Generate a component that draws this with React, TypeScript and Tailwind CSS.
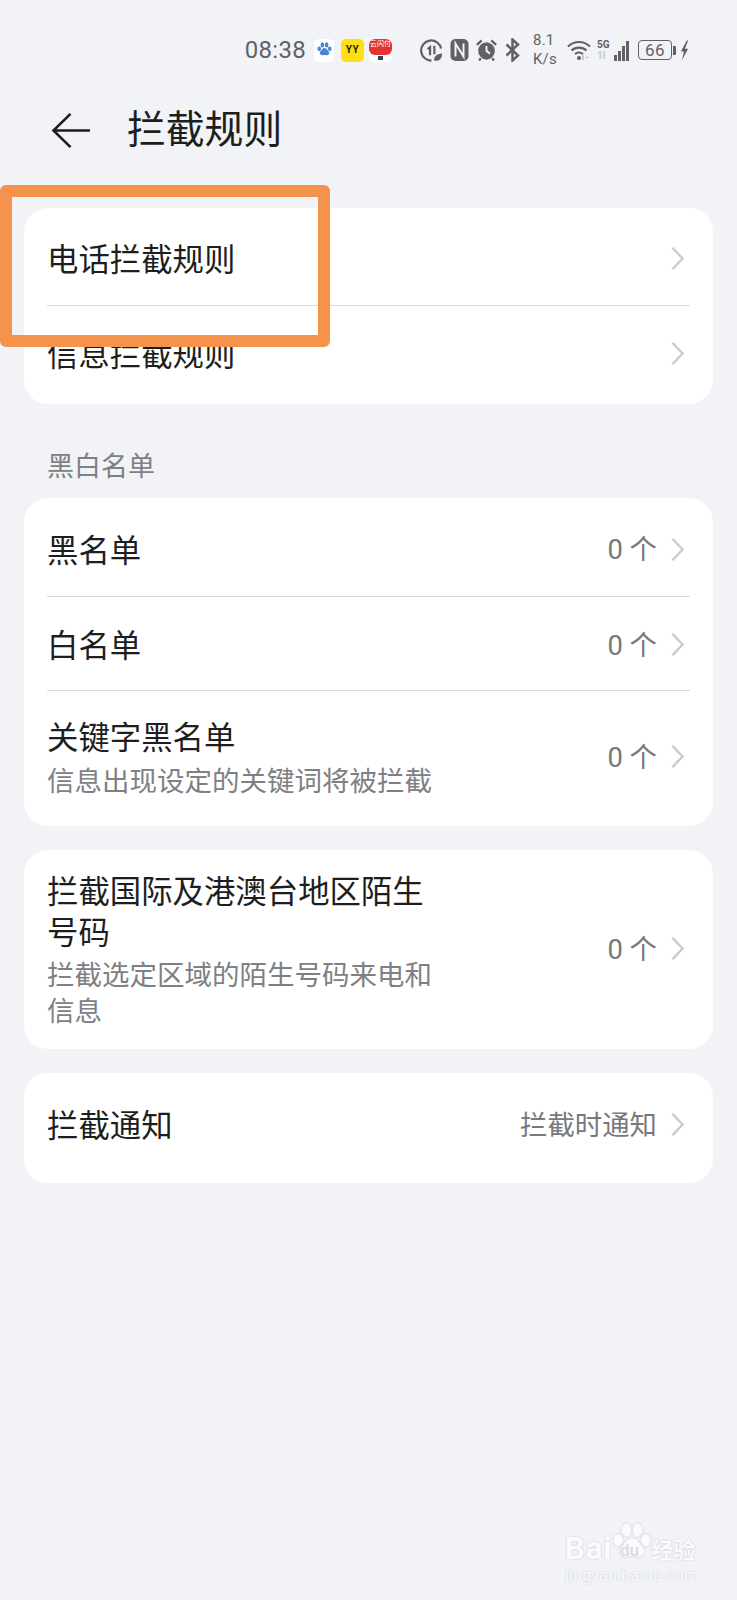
const font = { fontFamily: '"Roboto", "Noto Sans CJK SC", sans-serif' };

function Paw({ className, fill }: { className: string; fill: string }) {
  return (
    <svg viewBox="0 0 24 24" className={className} fill={fill}>
      <ellipse cx="4.500" cy="11" rx="2.600" ry="3.400" />
      <ellipse cx="9" cy="5.500" rx="2.600" ry="3.600" />
      <ellipse cx="15" cy="5.500" rx="2.600" ry="3.600" />
      <ellipse cx="19.500" cy="11" rx="2.600" ry="3.400" />
      <path d="M12 10c-2.600 0-3.600 2.400-5 3.800-1.600 1.600-2 3.200-1.300 4.700.8 1.600 2.800 1.900 4 1.500 1.500-.5 3.100-.5 4.600 0 1.200.4 3.200.1 4-1.500.7-1.500.3-3.100-1.300-4.700-1.400-1.400-2.400-3.800-5-3.800z" />
    </svg>
  );
}

function Chevron() {
  return (
    <svg viewBox="0 0 14 26" className="w-[13px] h-[25px] shrink-0 -mt-[4px]" fill="none" stroke="#c9cacc" strokeWidth="2.500">
      <path d="M1.500 1.500L12.500 13 1.500 24.500" />
    </svg>
  );
}

function StatusBar() {
  return (
    <div className="h-[90px] pt-[35px] pr-[48px] flex items-center justify-end text-[#5f6166] pb-[25px]">
      <span className="text-[24px] leading-[30px] tracking-[0.3px]">08:38</span>
      {/* app notification icons */}
      <div className="w-[20px] h-[23px] ml-[8px] bg-white rounded-[5px] flex flex-col items-center pt-[2px]">
        <Paw className="w-[17px] h-[17px]" fill="#4a86d0" />
      </div>
      <div className="w-[23px] h-[23px] ml-[7px] bg-[#ffdf0f] rounded-[5px] flex items-center justify-center text-[10px] leading-none font-bold tracking-[0.5px] text-[#222]">
        YY
      </div>
      <div className="w-[23px] h-[23px] ml-[5px] bg-white rounded-[6px] overflow-hidden flex flex-col items-center">
        <div className="w-full h-[16px] bg-[#e2352f] rounded-b-[6px] text-[7px] leading-[11px] text-center text-white whitespace-nowrap">
          云闪付
        </div>
        <div className="w-[5px] h-[4px] mt-[1px] bg-[#33415c]" />
      </div>
      {/* system icons */}
      <svg viewBox="0 0 24 24" className="w-[23px] h-[23px] ml-[28px]" fill="none" stroke="#5f6166" strokeWidth="2.300">
        <path d="M22 10A10.500 10.500 0 1 0 12 22.500" />
        <path d="M8 10.500l2.500-2V17M15 7v9" />
        <path d="M14.500 22.500c0-4.500 3-7 8.500-7.500 0 5-2.500 8.500-8.500 7.500z" fill="#5f6166" stroke="none" />
      </svg>
      <svg viewBox="0 0 18 22" className="w-[19px] h-[22px] ml-[7px]">
        <rect width="18" height="22" rx="5" fill="#5f6166" />
        <path d="M5 17.500V4.500l8 13V4.500" fill="none" stroke="#f1f3f7" strokeWidth="2" />
      </svg>
      <svg viewBox="0 0 24 24" className="w-[21px] h-[22px] ml-[7px]" preserveAspectRatio="none">
        <circle cx="12" cy="13" r="9.500" fill="#5f6166" />
        <path d="M1 6.500L6.500 1.500M23 6.500L17.500 1.500M5.500 21l-2 2.500M18.500 21l2 2.500" stroke="#5f6166" strokeWidth="2.600" />
        <path d="M12 7.500V13l4 3" fill="none" stroke="#f1f3f7" strokeWidth="2.200" />
      </svg>
      <svg viewBox="0 0 14 24" className="w-[15px] h-[24px] ml-[8px]" fill="none" stroke="#5f6166" strokeWidth="2.500">
        <path d="M1 6.500l11.500 11L7 22.500v-21l5.500 5L1 17.500" />
      </svg>
      <div className="w-[24px] ml-[13px] text-[15px] leading-[19px] tracking-[0.2px] -mt-[1px]">
        8.1
        <br />
        K/s
      </div>
      <svg viewBox="0 0 24 22" className="w-[24px] h-[22px] ml-[10px]" fill="none" stroke="#5f6166" strokeWidth="2.200">
        <path d="M1 7.500c6.500-6 15.500-6 22 0M4.500 11.500c4.200-3.800 10.800-3.800 15 0M8 15c2.300-2 5.700-2 8 0" />
        <circle cx="12" cy="19" r="2" fill="#5f6166" stroke="none" />
        <path d="M16 16v5M19 18.500l2 0" stroke="#b9bbbe" strokeWidth="1.500" />
      </svg>
      <div className="flex flex-col ml-[6px] w-[11px] text-[10px] leading-[11px] font-bold">
        <span>5G</span>
        <span className="text-[#c8cacd]">1l</span>
      </div>
      <div className="flex items-end h-[22px] gap-[1px] ml-[6px]">
        <div className="w-[3px] h-[6px] bg-[#5f6166]" />
        <div className="w-[3px] h-[10px] bg-[#5f6166]" />
        <div className="w-[3px] h-[15px] bg-[#5f6166]" />
        <div className="w-[3px] h-[20px] bg-[#5f6166]" />
      </div>
      <div className="w-[34px] h-[20px] ml-[9px] border-[1.500px] border-[#5f6166] rounded-[4px] flex items-center justify-center text-[17px] leading-none tracking-[0.5px]">
        66
      </div>
      <div className="w-[3px] h-[9px] ml-[1px] bg-[#5f6166] rounded-r-[1px]" />
      <svg viewBox="0 0 10 22" className="w-[9px] h-[21px] ml-[4px]" fill="#5f6166">
        <path d="M7.500 0L1 12h3.500L2 22l7-13H5.500L9 0z" />
      </svg>
    </div>
  );
}

function Row({
  title,
  sub,
  value,
  className,
  subClassName,
  divider,
}: {
  title: React.ReactNode;
  sub?: React.ReactNode;
  value?: string;
  className: string;
  subClassName?: string;
  divider?: boolean;
}) {
  return (
    <div className={`relative flex items-center pl-[23px] pr-[29px] ${className}`}>
      <div className="flex-1 min-w-0">
        <div className="text-[31.400px] leading-[41px] text-[#1d1e20]">{title}</div>
        {sub && <div className={`text-[27.500px] leading-[36px] text-[#7e8084] ${subClassName}`}>{sub}</div>}
      </div>
      {value && <span className="text-[27.400px] text-[#77797d] mr-[14px]">{value}</span>}
      <Chevron />
      {divider && <div className="absolute left-[23px] right-[23px] bottom-0 h-px bg-[#d9d9da]" />}
    </div>
  );
}

export default function App() {
  return (
    <div className="relative w-[737px] h-[1600px] overflow-hidden bg-[#f1f3f7]" style={font}>
      <StatusBar />

      {/* Header */}
      <div className="h-[82px] flex items-center pl-[51px] pb-[2px]">
        <svg viewBox="0 0 40 38" className="w-[39px] h-[37px]" fill="none" stroke="#1b1c1e" strokeWidth="2.600">
          <path d="M20 2L2.500 19 20 36M3 19h37" />
        </svg>
        <h1 className="ml-[37px] text-[38.800px] font-normal leading-none text-[#1d1e20]">拦截规则</h1>
      </div>

      <div className="px-[24px] pt-[36px]">
        <div className="bg-white rounded-[24px]">
          <Row title="电话拦截规则" className="h-[98px] pt-[6px]" divider />
          <Row title="信息拦截规则" className="h-[98px]" />
        </div>

        <div className="pl-[23px] pt-[45px] pb-[12px] text-[27px] leading-[37px] text-[#7e8084]">黑白名单</div>

        <div className="bg-white rounded-[24px]">
          <Row title="黑名单" value="0 个" className="h-[99px] pt-[7px]" divider />
          <Row title="白名单" value="0 个" className="h-[94px] pt-[5px]" divider />
          <Row title="关键字黑名单" sub="信息出现设定的关键词将被拦截" subClassName="mt-[5px]" value="0 个" className="h-[135px]" />
        </div>

        <div className="bg-white rounded-[24px] mt-[24px]">
          <Row
            title={
              <>
                拦截国际及港澳台地区陌生
                <br />
                号码
              </>
            }
            sub={
              <>
                拦截选定区域的陌生号码来电和
                <br />
                信息
              </>
            }
            subClassName="mt-[4px]"
            value="0 个"
            className="h-[199px] pt-[2px]"
          />
        </div>

        <div className="bg-white rounded-[24px] mt-[24px]">
          <Row title="拦截通知" value="拦截时通知" className="h-[110px] pb-[3px]" />
        </div>
      </div>

      {/* orange highlight drawn over the screenshot */}
      <div className="absolute left-0 top-[185px] w-[330px] h-[162px] border-[12px] border-[#f5934c] rounded-[6px]" />

      {/* watermark */}
      <div className="absolute left-[565px] top-[1520px] w-[134px] text-[#fbfbfd] [text-shadow:0_0_2px_#c4c6cc]">
        <Paw className="absolute left-[45px] top-0 w-[44px] h-[44px] drop-shadow-[0_0_1px_#c4c6cc]" fill="#fbfbfd" />
        <span className="absolute left-[55px] top-[22px] text-[17px] leading-none font-bold text-[#dcdee3] [text-shadow:none]">du</span>
        <div className="flex items-end h-[44px] text-[31px] leading-none font-bold">
          <span className="tracking-[1px]">Bai</span>
          <span className="ml-[39px] text-[22px] mb-[2px]">经验</span>
        </div>
        <div className="text-[16px] leading-[20px] mt-[2px] tracking-[0.2px]">jingyan.baidu.com</div>
      </div>
    </div>
  );
}
